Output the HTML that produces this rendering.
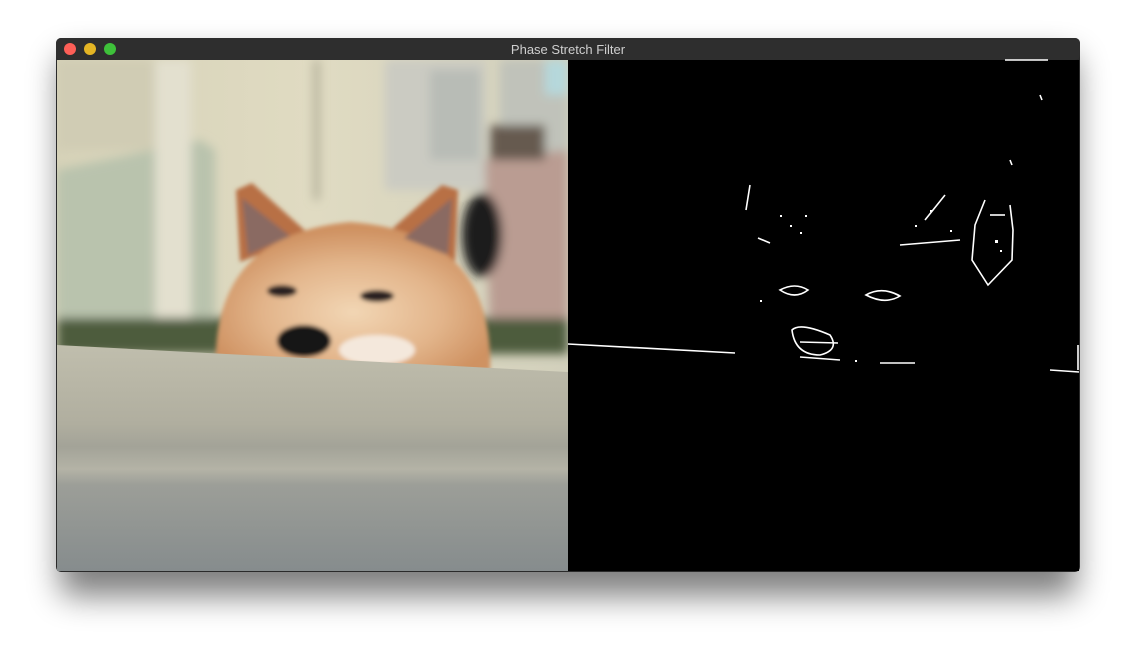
<!DOCTYPE html>
<html><head><style>
html,body{margin:0;padding:0;background:#fff;width:1136px;height:646px;overflow:hidden}
svg{display:block}
text{font-family:"Liberation Sans",sans-serif}
</style></head><body>
<svg width="1136" height="646" viewBox="0 0 1136 646">
<defs>
<filter id="sh" x="-10%" y="-10%" width="120%" height="130%"><feGaussianBlur stdDeviation="16"/></filter>
<filter id="b2"><feGaussianBlur stdDeviation="2"/></filter>
<filter id="b6"><feGaussianBlur stdDeviation="5"/></filter>
<linearGradient id="wall" x1="0" y1="0" x2="1" y2="0"><stop offset="0" stop-color="#d6d2b8"/><stop offset=".5" stop-color="#e0dbc2"/><stop offset="1" stop-color="#d2d0bc"/></linearGradient>
<linearGradient id="conc" x1="0" y1="0" x2="0" y2="1"><stop offset="0" stop-color="#c0bead"/><stop offset=".35" stop-color="#b0ae9f"/><stop offset=".45" stop-color="#a3a398"/><stop offset=".55" stop-color="#b4b3a6"/><stop offset=".62" stop-color="#9c9e98"/><stop offset="1" stop-color="#868c8d"/></linearGradient>
<radialGradient id="face" cx=".5" cy=".6" r=".55"><stop offset="0" stop-color="#f2d6b4"/><stop offset=".6" stop-color="#e2b48a"/><stop offset="1" stop-color="#cf9262"/></radialGradient>
</defs>
<rect x="60" y="56" width="1016" height="540" rx="10" fill="#000" opacity=".5" filter="url(#sh)"/>
<rect x="56" y="38" width="1024" height="534" rx="5" fill="#2a2a2a"/>
<rect x="56" y="38" width="1024" height="22" rx="5" fill="#2e2e2e"/>
<circle cx="70" cy="49" r="6" fill="#fd5f57"/>
<circle cx="90" cy="49" r="6" fill="#e4b524"/>
<circle cx="110" cy="49" r="6" fill="#3ec13a"/>
<text x="568" y="54" text-anchor="middle" font-size="13" fill="#cfcfcf">Phase Stretch Filter</text>
<svg x="57" y="60" width="511" height="511" viewBox="57 60 511 511">
<rect x="57" y="60" width="511" height="511" fill="url(#wall)"/>
<g filter="url(#b6)">
<rect x="57" y="60" width="100" height="90" fill="#d0ccb4"/>
<polygon points="57,170 200,140 215,150 215,325 57,325" fill="#b9c3ad"/>
<rect x="155" y="60" width="36" height="265" fill="#e3e0cf"/>
<rect x="314" y="60" width="5" height="140" fill="#a8a690"/>
<rect x="385" y="60" width="100" height="130" fill="#cbcbc2"/>
<rect x="430" y="70" width="50" height="90" fill="#b8bcb6"/>
<rect x="500" y="60" width="68" height="100" fill="#c0c2ba"/>
<rect x="545" y="60" width="23" height="35" fill="#b5d8dc"/>
<polygon points="485,160 568,150 568,335 490,335" fill="#ba9c92"/>
<rect x="490" y="125" width="55" height="35" fill="#665a50"/>
<ellipse cx="482" cy="235" rx="20" ry="42" fill="#1a1a1e"/>
<rect x="57" y="318" width="511" height="36" fill="#4e5c3e"/>
</g>
<g filter="url(#b2)">
<polygon points="236,190 252,183 310,235 240,262" fill="#b86f45"/>
<polygon points="458,190 442,185 385,235 455,262" fill="#b86f45"/>
<path d="M216,372 Q210,235 350,222 Q495,232 490,372Z" fill="url(#face)"/>
<polygon points="242,198 290,236 248,255" fill="#8a6a62"/>
<polygon points="452,198 404,238 448,255" fill="#8a6a62"/>
<ellipse cx="282" cy="291" rx="15" ry="6" fill="#2a2020"/>
<ellipse cx="377" cy="296" rx="17" ry="6" fill="#2a2020"/>
<ellipse cx="304" cy="341" rx="27" ry="16" fill="#141418"/>
<ellipse cx="377" cy="350" rx="38" ry="15" fill="#f4e8dc"/>
</g>
<polygon points="57,345 568,372 568,571 57,571" fill="url(#conc)"/>
</svg>
<rect x="568" y="60" width="511" height="511" fill="#000"/>
<g stroke="#fff" fill="none" stroke-width="1.6">
<path d="M568,344 L735,353"/>
<path d="M1050,370 L1079,372 M1078,345 L1078,370"/>
<path d="M750,185 L746,210 M758,238 L770,243"/>
<path d="M780,290 Q795,282 808,290 Q795,300 780,290Z"/>
<path d="M866,295 Q882,286 900,296 Q885,305 866,295Z"/>
<path d="M792,330 Q800,322 830,335 Q840,350 820,355 Q795,355 792,330Z"/>
<path d="M800,342 L838,343"/>
<path d="M900,245 L960,240 M925,220 L945,195"/>
<path d="M985,200 L975,225 L972,260 L988,285 L1012,260 L1013,230 L1010,205"/>
<path d="M990,215 L1005,215"/>
<path d="M880,363 L915,363 M800,357 L840,360"/>
<path d="M1040,95 L1042,100 M1005,60 L1048,60 M1010,160 L1012,165"/>
</g>
<g fill="#fff">
<rect x="780" y="215" width="2" height="2"/><rect x="790" y="225" width="2" height="2"/><rect x="800" y="232" width="2" height="2"/><rect x="805" y="215" width="2" height="2"/><rect x="915" y="225" width="2" height="2"/><rect x="930" y="210" width="2" height="2"/><rect x="950" y="230" width="2" height="2"/><rect x="995" y="240" width="3" height="3"/><rect x="1000" y="250" width="2" height="2"/><rect x="760" y="300" width="2" height="2"/><rect x="855" y="360" width="2" height="2"/>
</g>
</svg>
</body></html>
